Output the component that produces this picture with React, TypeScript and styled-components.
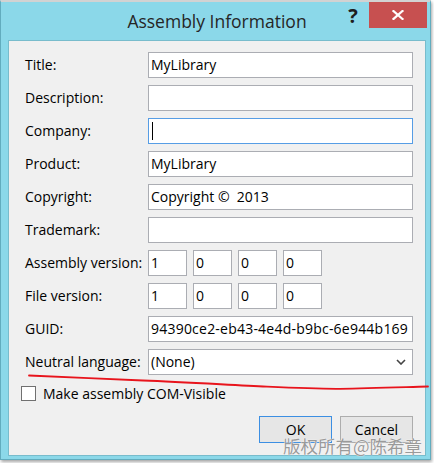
import React from "react";
import styled, { createGlobalStyle } from "styled-components";

const GlobalStyle = createGlobalStyle`
  html, body {
    margin: 0;
    padding: 0;
    background: #ffffff;
  }
  body {
    font-family: "Open Sans", "Noto Sans", sans-serif;
    color: #000;
  }
`;

const Page = styled.div`
  position: relative;
  width: 434px;
  height: 463px;
  overflow: hidden;
  background: #ffffff;
`;

const Window = styled.div`
  display: flex;
  flex-direction: column;
  width: 431px;
  height: 460px;
  box-sizing: border-box;
  background: #8bd8e9;
  border: 1px solid #62acbe;
  border-top: 2px solid #d2d2d2;
  box-shadow: 1px 2px 3px rgba(0, 0, 0, 0.35);
`;

const TitleBar = styled.div`
  display: grid;
  grid-template-columns: 1fr auto 1fr;
  height: 38px;
  padding-left: 3px;
`;

const Title = styled.div`
  grid-column: 2;
  padding-top: 7px;
  font-size: 17.5px;
  line-height: 24px;
  color: #262626;
  white-space: nowrap;
`;

const Controls = styled.div`
  grid-column: 3;
  justify-self: end;
  display: flex;
  align-items: flex-start;
  margin-right: 3px;
`;

const HelpButton = styled.div`
  width: 30px;
  height: 26px;
  margin-right: 1px;
  padding-top: 1px;
  box-sizing: border-box;
  text-align: center;
  font-size: 20px;
  font-weight: 700;
  line-height: 26px;
  color: #1e1e1e;
`;

const CloseButton = styled.div`
  display: flex;
  align-items: center;
  justify-content: center;
  width: 58px;
  height: 26px;
  background: #c75050;
`;

const Client = styled.div`
  flex: 1;
  display: flex;
  flex-direction: column;
  margin: 0 4px 3px 7px;
  padding: 11px 11px 12px 12px;
  box-sizing: border-box;
  background: #f0f0f0;
  border: 1px solid #78bccc;
`;

const Form = styled.div`
  display: grid;
  grid-template-columns: 123px 265px;
  grid-auto-rows: 26px;
  row-gap: 7px;
  padding-left: 4px;
`;

const Label = styled.div`
  font-size: 14px;
  line-height: 26px;
  white-space: nowrap;
`;

const Field = styled.div<{ $focused?: boolean; $width?: number; $spacing?: number }>`
  display: flex;
  align-items: center;
  width: ${({ $width }) => ($width ? `${$width}px` : "auto")};
  height: 26px;
  box-sizing: border-box;
  padding: 0 2px;
  background: #ffffff;
  border: 1px solid ${({ $focused }) => ($focused ? "#569de5" : "#abadb3")};
  font-size: 14px;
  line-height: 24px;
  letter-spacing: ${({ $spacing }) => $spacing ?? 0}px;
  white-space: pre;
  overflow: hidden;
`;

const Caret = styled.span`
  display: block;
  width: 1px;
  height: 18px;
  margin-left: 1px;
  background: #000;
`;

const VersionGroup = styled.div`
  display: flex;
  gap: 6px;
`;

const Select = styled(Field)`
  justify-content: space-between;
  padding-right: 6px;
`;

const CheckRow = styled.div`
  display: flex;
  align-items: center;
  gap: 7px;
  margin-top: 9px;
  font-size: 14px;
  line-height: 19px;
`;

const CheckBox = styled.div`
  width: 15px;
  height: 15px;
  box-sizing: border-box;
  background: #ffffff;
  border: 1px solid #707070;
`;

const ButtonRow = styled.div`
  display: flex;
  justify-content: flex-end;
  gap: 8px;
  margin-top: auto;
  padding-right: 1px;
`;

const Button = styled.div<{ $default?: boolean }>`
  display: flex;
  align-items: center;
  justify-content: center;
  width: 73px;
  height: 27px;
  box-sizing: border-box;
  background: #e6e6e6;
  border: 1px solid ${({ $default }) => ($default ? "#3c8fe3" : "#adadad")};
  font-size: 14px;
`;

const Watermark = styled.div`
  position: absolute;
  left: 283px;
  top: 436px;
  font-family: "Noto Sans CJK SC", sans-serif;
  font-size: 17.5px;
  line-height: 19px;
  color: #9a9a9a;
  text-shadow: 0 0 1px #ffffff, 0 0 1px #ffffff;
  white-space: nowrap;
`;

const Annotation = styled.svg`
  position: absolute;
  left: 0;
  top: 0;
  pointer-events: none;
`;

const CloseGlyph = () => (
  <svg width="12" height="10" viewBox="0 0 12 10">
    <path d="M1.5 1 L10.5 9 M10.5 1 L1.5 9" stroke="#ffffff" strokeWidth="2.2" strokeLinecap="square" />
  </svg>
);

const Chevron = () => (
  <svg width="10" height="6" viewBox="0 0 10 6">
    <polyline points="1,1 5,5 9,1" fill="none" stroke="#444" strokeWidth="1.6" />
  </svg>
);

const textRows: { label: string; value: string; focused?: boolean }[] = [
  { label: "Title:", value: "MyLibrary" },
  { label: "Description:", value: "" },
  { label: "Company:", value: "", focused: true },
  { label: "Product:", value: "MyLibrary" },
  { label: "Copyright:", value: "Copyright ©  2013" },
  { label: "Trademark:", value: "" },
];

const versions = [
  { label: "Assembly version:", parts: ["1", "0", "0", "0"] },
  { label: "File version:", parts: ["1", "0", "0", "0"] },
];

export default function App() {
  return (
    <Page>
      <GlobalStyle />
      <Window>
        <TitleBar>
          <Title>Assembly Information</Title>
          <Controls>
            <HelpButton>?</HelpButton>
            <CloseButton>
              <CloseGlyph />
            </CloseButton>
          </Controls>
        </TitleBar>
        <Client>
          <Form>
            {textRows.map((row) => (
              <React.Fragment key={row.label}>
                <Label>{row.label}</Label>
                <Field $focused={row.focused}>
                  {row.focused ? <Caret /> : row.value}
                </Field>
              </React.Fragment>
            ))}
            {versions.map((row) => (
              <React.Fragment key={row.label}>
                <Label>{row.label}</Label>
                <VersionGroup>
                  {row.parts.map((p, i) => (
                    <Field key={i} $width={39}>
                      {p}
                    </Field>
                  ))}
                </VersionGroup>
              </React.Fragment>
            ))}
            <Label>GUID:</Label>
            <Field $spacing={0.22}>94390ce2-eb43-4e4d-b9bc-6e944b169</Field>
            <Label>Neutral language:</Label>
            <Select>
              <span>(None)</span>
              <Chevron />
            </Select>
          </Form>
          <CheckRow>
            <CheckBox />
            <span>Make assembly COM-Visible</span>
          </CheckRow>
          <ButtonRow>
            <Button $default>OK</Button>
            <Button>Cancel</Button>
          </ButtonRow>
        </Client>
      </Window>
      <Annotation width="434" height="463" viewBox="0 0 434 463">
        <path
          d="M29 375.5 C 60 377, 110 379, 143 380.5 C 185 382, 230 385, 267 386.7 C 300 388.2, 320 389, 340 388.8 C 370 388.4, 400 387.3, 428 386.5"
          fill="none"
          stroke="#e8141c"
          strokeWidth="1.8"
          strokeLinecap="round"
        />
      </Annotation>
      <Watermark>版权所有@陈希章</Watermark>
    </Page>
  );
}
